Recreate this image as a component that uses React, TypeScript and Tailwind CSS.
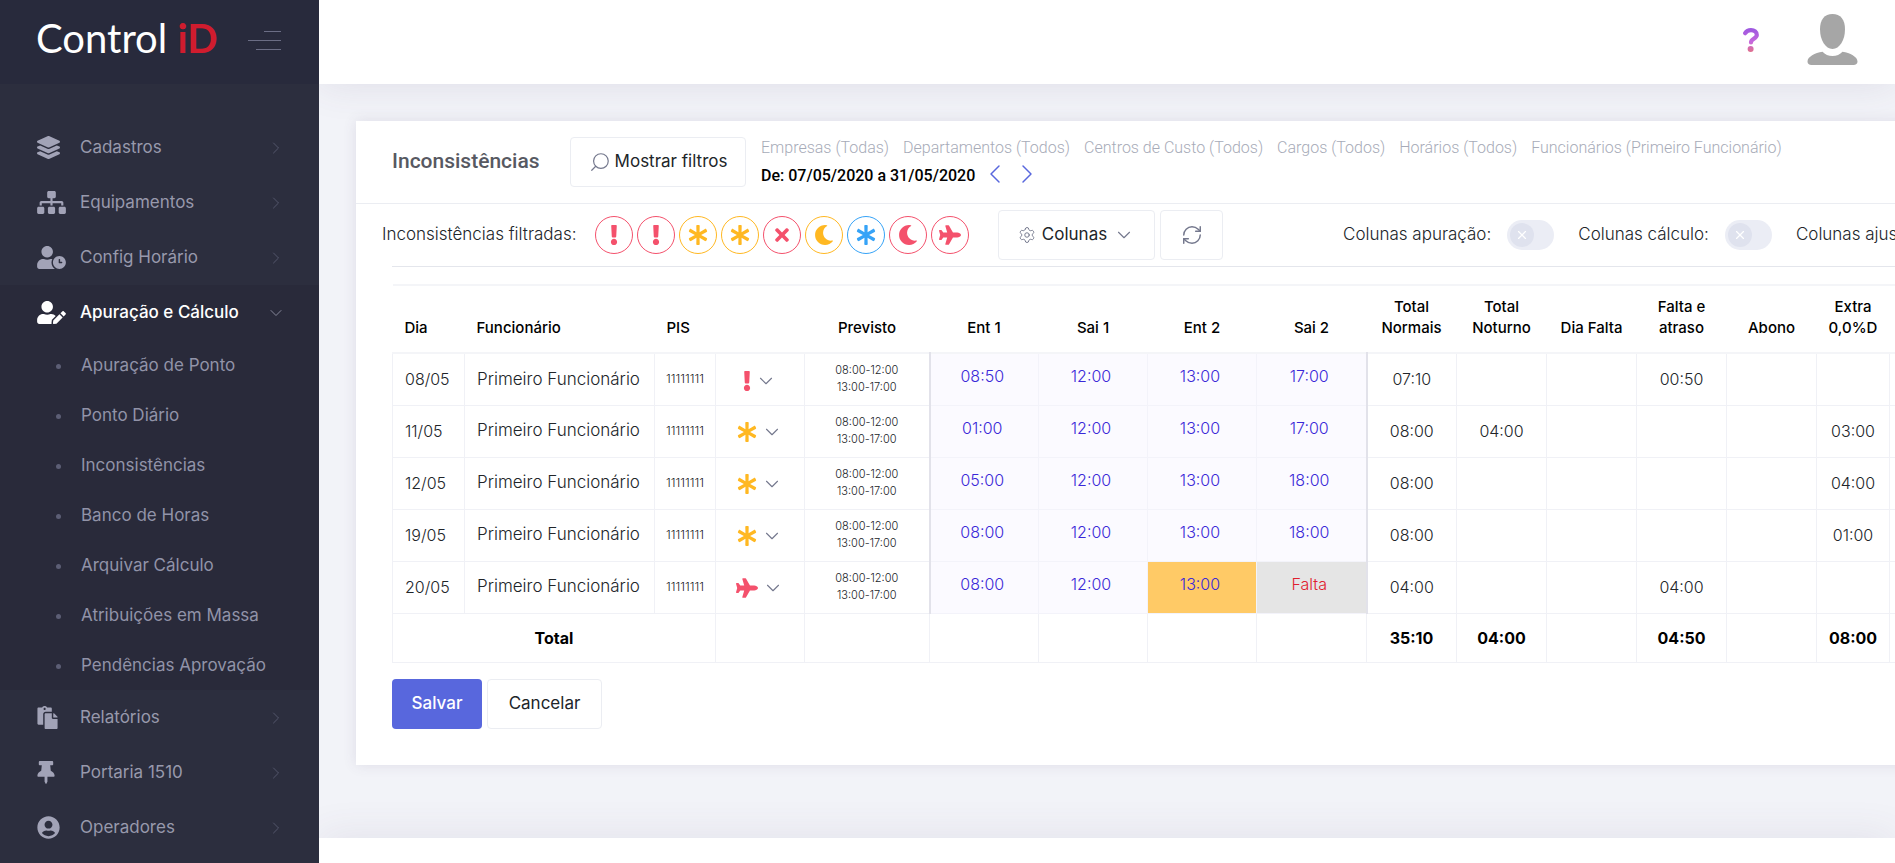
import type { ReactNode } from "react";
import type { IconType } from "react-icons";
import {
  FaAsterisk,
  FaExclamation,
  FaLayerGroup,
  FaMoon,
  FaPaste,
  FaPlane,
  FaSitemap,
  FaThumbtack,
  FaTimes,
  FaUserCircle,
  FaUserClock,
  FaUserEdit,
} from "react-icons/fa";
import { ChevronDown, ChevronLeft, ChevronRight, RefreshCw, Search, Settings, X } from "lucide-react";

const subItems = [
  "Apuração de Ponto",
  "Ponto Diário",
  "Inconsistências",
  "Banco de Horas",
  "Arquivar Cálculo",
  "Atribuições em Massa",
  "Pendências Aprovação",
];

type NavItemProps = { icon: IconType; label: string; width?: string; active?: boolean };

function NavItem({ icon: Icon, label, width = "w-[23px]", active = false }: NavItemProps) {
  return (
    <a
      href="#"
      className={`flex h-[55px] items-center pr-[33px] pl-[37px] ${active ? "font-medium text-white" : "text-[#9899ac]"}`}
    >
      <span className={`w-[43px] shrink-0 ${active ? "text-white" : "text-[#a2a3b7]"}`}>
        <Icon className={`h-[23px] ${width}`} />
      </span>
      <span className="grow whitespace-nowrap">{label}</span>
      {active ? (
        <ChevronDown className="size-5 shrink-0 text-[#9899ac]" strokeWidth={1} />
      ) : (
        <ChevronRight className="size-5 shrink-0 text-[#5c5e75]" strokeWidth={1} />
      )}
    </a>
  );
}

function Sidebar() {
  return (
    <aside className="w-[319px] shrink-0 bg-[#2c2e3e] text-[17px]">
      <div className="flex h-[84px] items-center justify-between bg-[#282a3c] pr-[38px] pb-1 pl-9">
        <a href="#" className="pb-1 font-['Lato'] text-[40px] leading-none whitespace-nowrap text-white">
          Control <span className="font-bold text-[#d01c2e]">iD</span>
        </a>
        <button type="button" aria-label="Alternar menu" className="flex w-[33px] flex-col items-end gap-2">
          <span className="h-px w-[17px] bg-[#6b6d85]" />
          <span className="h-px w-[33px] bg-[#6b6d85]" />
          <span className="h-px w-[25px] bg-[#6b6d85]" />
        </button>
      </div>
      <nav className="pt-9">
        <NavItem icon={FaLayerGroup} label="Cadastros" />
        <NavItem icon={FaSitemap} label="Equipamentos" width="w-[29px]" />
        <NavItem icon={FaUserClock} label="Config Horário" width="w-[29px]" />
        <div className="bg-[#292a3a]">
          <NavItem icon={FaUserEdit} label="Apuração e Cálculo" width="w-[29px]" active />
          <ul>
            {subItems.map((item) => (
              <li key={item}>
                <a href="#" className="flex h-[50px] items-center pt-0.5 pl-14 whitespace-nowrap text-[#9193a8]">
                  <span className="mr-5 size-[5px] rounded-sm bg-[#5c5e75]" />
                  {item}
                </a>
              </li>
            ))}
          </ul>
        </div>
        <NavItem icon={FaPaste} label="Relatórios" width="w-[21px]" />
        <NavItem icon={FaThumbtack} label="Portaria 1510" width="w-[18px]" />
        <NavItem icon={FaUserCircle} label="Operadores" />
      </nav>
    </aside>
  );
}

function TopBar() {
  return (
    <header className="relative z-10 flex h-[84px] shrink-0 items-center justify-end gap-12 bg-white pr-[37px] pb-[5px] shadow-[0_0_40px_rgba(82,63,105,0.12)]">
      <button type="button" aria-label="Ajuda">
        <svg className="h-6 w-4" viewBox="0 0 16 24" fill="none">
          <defs>
            <linearGradient id="help" x1="0" y1="0" x2="0" y2="24" gradientUnits="userSpaceOnUse">
              <stop offset="0" stopColor="#9b57e0" />
              <stop offset="0.6" stopColor="#c768dc" />
              <stop offset="1" stopColor="#e0708a" />
            </linearGradient>
          </defs>
          <path
            d="M2.2 5.2C3.4 3.2 5.4 2.2 8 2.2c3.4 0 5.8 1.8 5.8 4.8 0 3.6-5.8 4-5.8 7.4"
            stroke="url(#help)"
            strokeWidth="4.2"
            strokeLinecap="round"
          />
          <circle cx="7.6" cy="21" r="3" fill="url(#help)" />
        </svg>
      </button>
      <button type="button" aria-label="Perfil">
        <svg className="h-[51px] w-[51px]" viewBox="0 0 51 51" fill="#a6a6a6">
          <path d="M25.500 0C33.500 0 38 5.500 38 15.500 38 26 32.500 35 25.500 35S13 26 13 15.500C13 5.500 17.500 0 25.500 0Z" />
          <path d="M15.500 37.800C18 40.600 21.500 42 25.500 42s7.500-1.400 10-4.200C43 39 50.500 42.800 50.500 47.500 50.500 49.500 49 51 46.500 51h-42C2 51 .5 49.500.5 47.500.5 42.800 8 39 15.500 37.800Z" />
        </svg>
      </button>
    </header>
  );
}

const filters = [
  "Empresas (Todas)",
  "Departamentos (Todos)",
  "Centros de Custo (Todos)",
  "Cargos (Todos)",
  "Horários (Todos)",
  "Funcionários (Primeiro Funcionário)",
];

const outline = "flex h-[50px] items-center rounded border border-[#ebedf2] bg-white text-[17px] text-[#212529]";

function CardHead() {
  return (
    <div className="flex h-[83px] items-center border-b border-[#ebedf2] pb-px pl-9">
      <h1 className="w-[178px] font-['Roboto'] text-[21px] font-medium text-[#575962]">Inconsistências</h1>
      <button type="button" className={`${outline} w-44 justify-center gap-1 whitespace-nowrap`}>
        <Search className="size-[22px] -scale-x-100 text-[#74788d]" strokeWidth={1.3} />
        Mostrar filtros
      </button>
      <div className="ml-[15px] font-['Roboto'] text-[16px] leading-7">
        <ul className="flex gap-[14px] font-light whitespace-nowrap text-[#a7abb8]">
          {filters.map((filter) => (
            <li key={filter}>{filter}</li>
          ))}
        </ul>
        <div className="flex h-7 items-center">
          <p className="mr-1 font-medium text-black">De: 07/05/2020 a 31/05/2020</p>
          <button type="button" aria-label="Período anterior" className="w-8 pb-1 text-[#5867dd]">
            <ChevronLeft className="size-8" strokeWidth={1.1} />
          </button>
          <button type="button" aria-label="Próximo período" className="pb-1 text-[#5867dd]">
            <ChevronRight className="size-8" strokeWidth={1.1} />
          </button>
        </div>
      </div>
    </div>
  );
}

const red = "text-[#f4516c]";
const yellow = "text-[#ffb822]";
const blue = "text-[#36a3f7]";

const iconSize = new Map<IconType, string>([
  [FaExclamation, "h-5 w-2"],
  [FaTimes, "h-5 w-3.5"],
  [FaPlane, "h-5 w-[22px]"],
]);

function StatusIcon({ icon: Icon, className = "" }: { icon: IconType; className?: string }) {
  return <Icon className={`${iconSize.get(Icon) ?? "size-5"} ${className}`} />;
}

const badges: { icon: IconType; color: string; label: string }[] = [
  { icon: FaExclamation, color: red, label: "Alerta" },
  { icon: FaExclamation, color: red, label: "Alerta de falta" },
  { icon: FaAsterisk, color: yellow, label: "Hora extra" },
  { icon: FaAsterisk, color: yellow, label: "Extra pendente" },
  { icon: FaTimes, color: red, label: "Inválido" },
  { icon: FaMoon, color: yellow, label: "Noturno" },
  { icon: FaAsterisk, color: blue, label: "Ajuste" },
  { icon: FaMoon, color: red, label: "Noturno pendente" },
  { icon: FaPlane, color: red, label: "Afastamento" },
];

function Toggle({ label }: { label: string }) {
  return (
    <label className="flex items-center gap-4 whitespace-nowrap">
      {label}
      <input type="checkbox" className="peer sr-only" />
      <span className="flex h-[30px] w-[47px] items-center rounded-full bg-[#ebedf5] px-[3px] peer-checked:justify-end">
        <span className="flex size-6 items-center justify-center rounded-full bg-[#dfe2ee] text-white">
          <X className="size-3.5" strokeWidth={2} />
        </span>
      </span>
    </label>
  );
}

function Toolbar() {
  return (
    <div className="ml-9 flex h-[63px] items-center border-b border-[#e4e6ec]">
      <p className="-ml-2.5 w-[213px] text-[17px] font-light whitespace-nowrap text-[#212529]">
        Inconsistências filtradas:
      </p>
      <div className="flex w-[374px] justify-between">
        {badges.map(({ icon, color, label }) => (
          <button
            key={label}
            type="button"
            aria-label={label}
            className={`flex size-[38px] items-center justify-center rounded-full border border-current ${color}`}
          >
            <StatusIcon icon={icon} />
          </button>
        ))}
      </div>
      <button type="button" className={`${outline} ml-[29px] w-[157px] justify-center gap-1.5`}>
        <Settings className="size-[18px] text-[#74788d]" strokeWidth={1.3} />
        Colunas
        <ChevronDown className="size-[22px] text-[#74788d]" strokeWidth={1.2} />
      </button>
      <button type="button" aria-label="Atualizar" className={`${outline} ml-[5px] w-[63px] justify-center`}>
        <RefreshCw className="size-[22px] text-[#74788d]" strokeWidth={1.6} />
      </button>
      <div className="ml-[120px] flex gap-6 pr-10 text-[17px] font-light text-[#212529]">
        <Toggle label="Colunas apuração:" />
        <Toggle label="Colunas cálculo:" />
        <Toggle label="Colunas ajuste:" />
      </div>
    </div>
  );
}

const rows: { dia: string; icon: IconType; color: string; marks: string[]; totals: string[] }[] = [
  { dia: "08/05", icon: FaExclamation, color: red, marks: ["08:50", "12:00", "13:00", "17:00"], totals: ["07:10", "", "", "00:50", "", ""] },
  { dia: "11/05", icon: FaAsterisk, color: yellow, marks: ["01:00", "12:00", "13:00", "17:00"], totals: ["08:00", "04:00", "", "", "", "03:00"] },
  { dia: "12/05", icon: FaAsterisk, color: yellow, marks: ["05:00", "12:00", "13:00", "18:00"], totals: ["08:00", "", "", "", "", "04:00"] },
  { dia: "19/05", icon: FaAsterisk, color: yellow, marks: ["08:00", "12:00", "13:00", "18:00"], totals: ["08:00", "", "", "", "", "01:00"] },
  { dia: "20/05", icon: FaPlane, color: red, marks: ["08:00", "12:00", "13:00", "Falta"], totals: ["04:00", "", "", "04:00", "", ""] },
];

const grandTotals = ["", "", "", "", "", "", "35:10", "04:00", "", "04:50", "", "08:00", ""];
const cell = "border border-[#f0f1f6]";

function markTone(row: string, column: number) {
  if (row === "20/05" && column === 2) return "bg-[#ffca66] text-[#3a28d8]";
  if (row === "20/05" && column === 3) return "bg-[#e5e5e5] text-[#e0202e]";
  return "bg-[#fbfaff] text-[#3a28d8]";
}

function Th({ children, left = false }: { children?: ReactNode; left?: boolean }) {
  return (
    <th className={`px-1.5 pb-3.5 align-bottom font-medium ${left ? "pl-3 text-left" : "text-center"}`}>{children}</th>
  );
}

function TimesTable() {
  return (
    <table className="mt-[17px] ml-9 w-[1587px] table-fixed border-collapse font-light text-[#212529]">
      <colgroup>
        <col className="w-[72px]" />
        <col className="w-[190px]" />
        <col className="w-[61px]" />
        <col className="w-[89px]" />
        <col className="w-[125px]" />
        <col className="w-[109px]" />
        <col className="w-[109px]" />
        <col className="w-[109px]" />
        <col className="w-[110px]" />
        <col className="w-[90px]" />
        <col className="w-[90px]" />
        <col className="w-[90px]" />
        <col className="w-[90px]" />
        <col className="w-[90px]" />
        <col className="w-[73px]" />
        <col className="w-[90px]" />
      </colgroup>
      <thead>
        <tr className="h-[68px] border-y-2 border-[#f4f5f8] text-[15px] leading-[21px] text-black">
          <Th left>Dia</Th>
          <Th left>Funcionário</Th>
          <Th left>PIS</Th>
          <Th />
          <Th>Previsto</Th>
          <Th>Ent 1</Th>
          <Th>Sai 1</Th>
          <Th>Ent 2</Th>
          <Th>Sai 2</Th>
          <Th>Total Normais</Th>
          <Th>Total Noturno</Th>
          <Th>Dia Falta</Th>
          <Th>Falta e atraso</Th>
          <Th>Abono</Th>
          <Th>Extra 0,0%D</Th>
          <Th />
        </tr>
      </thead>
      <tbody>
        {rows.map(({ dia, icon, color, marks, totals }) => (
          <tr key={dia} className="h-[52px] text-center text-[16px]">
            <td className={`${cell} pl-3 text-left`}>{dia}</td>
            <td className={`${cell} pl-3 text-left text-[17px] whitespace-nowrap`}>Primeiro Funcionário</td>
            <td className={`${cell} text-[12px]`}>11111111</td>
            <td className={cell}>
              <button type="button" aria-label={`Opções do dia ${dia}`} className="inline-flex items-center gap-1 align-middle">
                <StatusIcon icon={icon} className={color} />
                <ChevronDown className="size-[22px] text-[#74788d]" strokeWidth={1.2} />
              </button>
            </td>
            <td className={`${cell} text-[11px] leading-[17px]`}>
              08:00-12:00
              <br />
              13:00-17:00
            </td>
            {marks.map((mark, i) => (
              <td
                key={i}
                className={`border border-[#f3f3fa] pr-1 pb-1.5 ${i === 0 ? "border-l-2 border-l-[#e2e2ea]" : ""} ${i === 3 ? "border-r-2 border-r-[#e2e2ea]" : ""} ${markTone(dia, i)}`}
              >
                {mark}
              </td>
            ))}
            {totals.map((total, i) => (
              <td key={i} className={cell}>
                {total}
              </td>
            ))}
            <td className={cell} />
          </tr>
        ))}
      </tbody>
      <tfoot>
        <tr className="h-[49px] text-center text-[16px] font-bold text-black">
          <td colSpan={3} className={cell}>
            Total
          </td>
          {grandTotals.map((total, i) => (
            <td key={i} className={cell}>
              {total}
            </td>
          ))}
        </tr>
      </tfoot>
    </table>
  );
}

export default function App() {
  return (
    <div className="flex min-h-screen overflow-hidden bg-[#f2f3f8] font-['Inter',sans-serif] text-[16px]">
      <Sidebar />
      <div className="flex min-w-0 grow flex-col overflow-hidden">
        <TopBar />
        <main className="pt-[37px] pb-[73px] pl-[37px]">
          <section className="w-max min-w-full bg-white pb-9 shadow-[0_0_13px_rgba(82,63,105,0.12)]">
            <CardHead />
            <Toolbar />
            <TimesTable />
            <div className="mt-4 ml-9 flex gap-[5px]">
              <button type="button" className="h-[50px] w-[90px] rounded bg-[#5867dd] text-[17px] font-medium text-white">
                Salvar
              </button>
              <button type="button" className={`${outline} w-[115px] justify-center`}>
                Cancelar
              </button>
            </div>
          </section>
        </main>
        <footer className="relative grow bg-white shadow-[0_0_40px_rgba(82,63,105,0.12)]" />
      </div>
    </div>
  );
}
